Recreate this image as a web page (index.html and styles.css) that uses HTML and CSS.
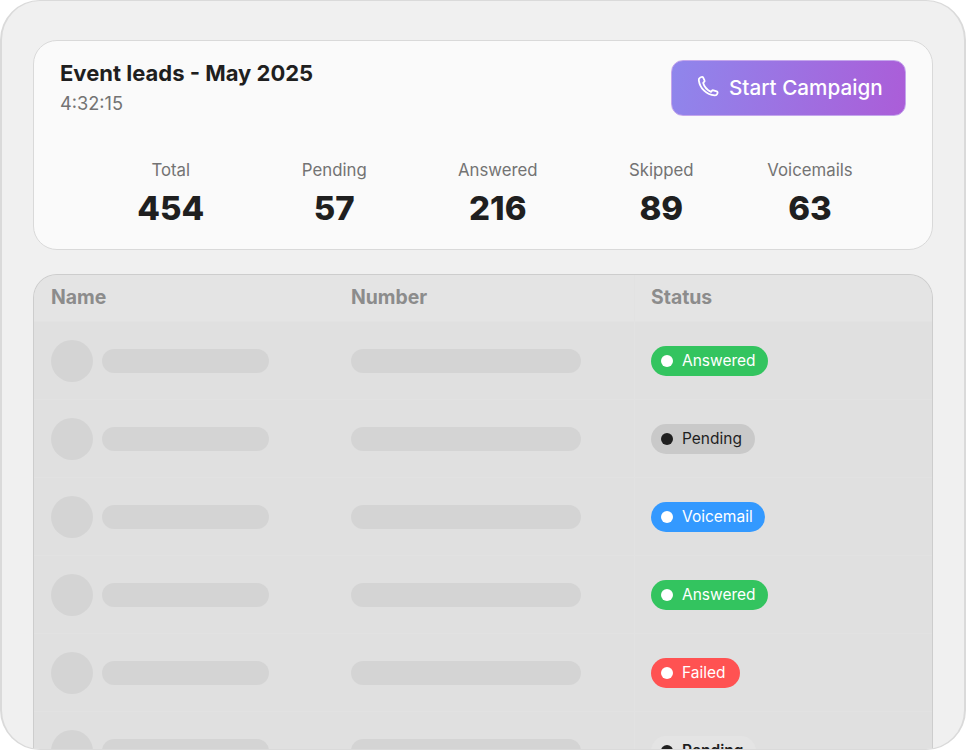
FILE: index.html
```html
<!DOCTYPE html>
<html lang="en">
<head>
    <meta charset="UTF-8">
    <meta name="viewport" content="width=device-width, initial-scale=1.0">
    <title>Event leads - May 2025</title>
    <link rel="stylesheet" href="styles.css">
</head>
<body>
    <div class="frame">
        <!-- Campaign summary -->
        <section class="summary-card">
            <div class="summary-top">
                <div>
                    <h1 class="summary-title">Event leads - May 2025</h1>
                    <p class="summary-time">4:32:15</p>
                </div>
                <button class="start-button" type="button">
                    <svg class="phone-icon" viewBox="0 0 24 24" fill="none" stroke="currentColor" stroke-width="1.8" stroke-linecap="round" stroke-linejoin="round">
                        <path d="M2.800 5.300c-.2-1.300.4-2.300 1.500-2.800l1.200-.5c.7-.3 1.400 0 1.700.6l1.300 2.700c.3.600.1 1.200-.4 1.600L7.200 7.900c1 3.700 3.700 6.800 7.800 9l.8-1c.4-.6 1-.8 1.600-.6l3.300 1.100c.8.300 1.100 1.100.8 1.800l-.3.800c-.4 1-1.400 1.500-2.500 1.400C10.500 19.800 4 13.500 2.800 5.300z"/>
                    </svg>
                    Start Campaign
                </button>
            </div>
            <div class="stats">
                <div class="stat"><span class="stat-label">Total</span><strong class="stat-value">454</strong></div>
                <div class="stat"><span class="stat-label">Pending</span><strong class="stat-value">57</strong></div>
                <div class="stat"><span class="stat-label">Answered</span><strong class="stat-value">216</strong></div>
                <div class="stat"><span class="stat-label">Skipped</span><strong class="stat-value">89</strong></div>
                <div class="stat"><span class="stat-label">Voicemails</span><strong class="stat-value">63</strong></div>
            </div>
        </section>

        <!-- Leads table -->
        <section class="leads-card">
            <div class="leads-row leads-head">
                <div>Name</div>
                <div>Number</div>
                <div class="status-cell">Status</div>
            </div>
            <div class="leads-row">
                <div class="name-cell"><span class="avatar"></span><span class="bar name-bar"></span></div>
                <div><span class="bar number-bar"></span></div>
                <div class="status-cell"><span class="badge badge-answered"><i class="dot"></i>Answered</span></div>
            </div>
            <div class="leads-row">
                <div class="name-cell"><span class="avatar"></span><span class="bar name-bar"></span></div>
                <div><span class="bar number-bar"></span></div>
                <div class="status-cell"><span class="badge badge-pending"><i class="dot"></i>Pending</span></div>
            </div>
            <div class="leads-row">
                <div class="name-cell"><span class="avatar"></span><span class="bar name-bar"></span></div>
                <div><span class="bar number-bar"></span></div>
                <div class="status-cell"><span class="badge badge-voicemail"><i class="dot"></i>Voicemail</span></div>
            </div>
            <div class="leads-row">
                <div class="name-cell"><span class="avatar"></span><span class="bar name-bar"></span></div>
                <div><span class="bar number-bar"></span></div>
                <div class="status-cell"><span class="badge badge-answered"><i class="dot"></i>Answered</span></div>
            </div>
            <div class="leads-row">
                <div class="name-cell"><span class="avatar"></span><span class="bar name-bar"></span></div>
                <div><span class="bar number-bar"></span></div>
                <div class="status-cell"><span class="badge badge-failed"><i class="dot"></i>Failed</span></div>
            </div>
            <div class="leads-row">
                <div class="name-cell"><span class="avatar"></span><span class="bar name-bar"></span></div>
                <div><span class="bar number-bar"></span></div>
                <div class="status-cell"><span class="badge badge-pending badge-last"><i class="dot"></i>Pending</span></div>
            </div>
        </section>
    </div>
</body>
</html>
```

FILE: styles.css
```css
/* Reset */
* {
    margin: 0;
    padding: 0;
    box-sizing: border-box;
}

html, body {
    height: 100%;
    overflow: hidden;
    background: #ffffff;
    font-family: "Inter", "Liberation Sans", sans-serif;
    color: #1f1f1f;
}

/* Outer frame */
.frame {
    width: 966px;
    height: 750px;
    padding: 39px 31px 0;
    background: #f0f0f0;
    border: 1px solid #dadada;
    border-width: 1px 2px 1px 2px;
    border-radius: 40px;
    overflow: hidden;
}

/* Summary card */
.summary-card {
    height: 210px;
    padding: 18px 26px 0;
    background: #fafafa;
    border: 1px solid #d9d9d9;
    border-radius: 24px;
}

.summary-top {
    display: flex;
    justify-content: space-between;
    align-items: flex-start;
}

.summary-title {
    font-size: 22px;
    line-height: 28px;
    font-weight: 700;
}

.summary-time {
    font-size: 18.200px;
    line-height: 24px;
    margin-top: 4px;
    color: #737373;
}

.start-button {
    display: flex;
    align-items: center;
    gap: 9px;
    width: 235px;
    height: 56px;
    margin-top: 1px;
    padding: 0 0 2px 24px;
    font-family: inherit;
    font-size: 20.700px;
    font-weight: 500;
    color: #ffffff;
    background: linear-gradient(100deg, #8f86ec 0%, #ab5dd8 100%);
    border: 1px solid #c4a6ec;
    border-radius: 12px;
}

.phone-icon {
    width: 24px;
    height: 24px;
    flex: none;
}

/* Stats */
.stats {
    display: grid;
    grid-template-columns: repeat(4, 163.500px) 134px;
    margin: 43px 0 0 29px;
}

.stat {
    display: flex;
    flex-direction: column;
    align-items: center;
}

.stat-label {
    font-size: 16.800px;
    line-height: 22px;
    color: #737373;
}

.stat-value {
    font-size: 33px;
    line-height: 40px;
    margin-top: 7px;
    font-weight: 800;
}

/* Leads table */
.leads-card {
    height: 500px;
    margin-top: 24px;
    background: #e0e0e0;
    border: 1px solid #cdcdcd;
    border-bottom: 0;
    border-radius: 24px 24px 0 0;
    overflow: hidden;
}

.leads-row {
    display: grid;
    grid-template-columns: 300px 283px 1fr;
    align-items: center;
    height: 78px;
    padding-left: 17px;
    border-bottom: 1px solid #e2e2e2;
}

.leads-head {
    height: 47px;
    font-size: 19.400px;
    font-weight: 700;
    color: #8c8c8c;
    background: #e4e4e4;
}

.status-cell {
    display: flex;
    align-items: center;
    align-self: stretch;
    padding-left: 16px;
    border-left: 1px solid #e2e2e2;
}

.leads-head div {
    padding-bottom: 2px;
}

.name-cell {
    display: flex;
    align-items: center;
    gap: 9px;
}

.avatar {
    width: 42px;
    height: 42px;
    border-radius: 50%;
    background: #d4d4d4;
}

.bar {
    display: block;
    height: 24px;
    border-radius: 12px;
    background: #d4d4d4;
}

.name-bar {
    width: 167px;
}

.number-bar {
    width: 230px;
}

/* Status badges */
.badge {
    display: inline-flex;
    align-items: center;
    gap: 9px;
    height: 30px;
    padding: 0 13px 0 10px;
    border-radius: 15px;
    font-size: 15.500px;
    color: #ffffff;
}

.dot {
    width: 12px;
    height: 12px;
    border-radius: 50%;
    background: #ffffff;
}

.badge-answered {
    background: #33c45f;
    padding-right: 12px;
}

.badge-pending {
    background: #c9c9c9;
    color: #1f1f1f;
}

.badge-pending .dot {
    background: #1f1f1f;
}

.badge-voicemail {
    background: #3399ff;
    padding-right: 12px;
}

.badge-failed {
    background: #ff5252;
    padding-right: 14px;
}

.badge-last {
    background: #e4e4e4;
    font-weight: 600;
}
```
